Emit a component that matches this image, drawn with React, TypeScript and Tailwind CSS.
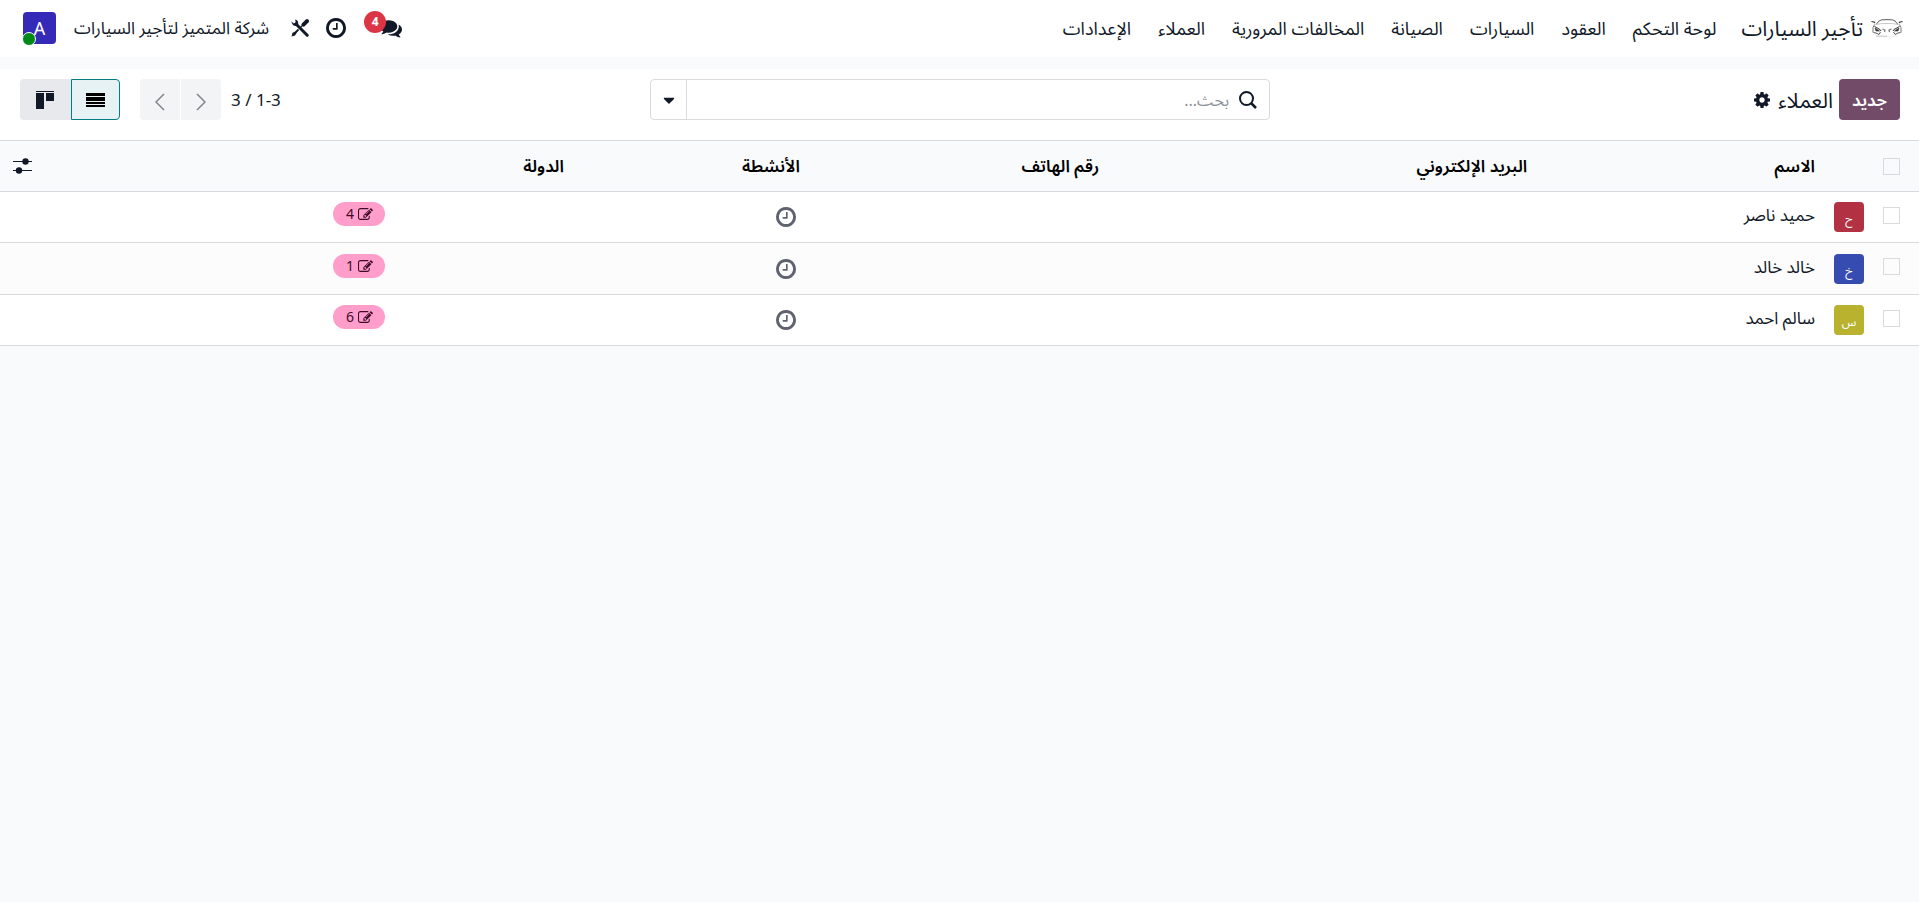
import { FaCaretDown } from "react-icons/fa";

type Customer = {
  id: number;
  name: string;
  initial: string;
  color: string;
  contracts: number;
};

const menu = ["لوحة التحكم", "العقود", "السيارات", "الصيانة", "المخالفات المرورية", "العملاء", "الإعدادات"];

const customers: Customer[] = [
  { id: 1, name: "حميد ناصر", initial: "ح", color: "bg-[#b23243]", contracts: 4 },
  { id: 2, name: "خالد خالد", initial: "خ", color: "bg-[#364cb0]", contracts: 1 },
  { id: 3, name: "سالم احمد", initial: "س", color: "bg-[#b8b22e]", contracts: 6 },
];

function ClockIcon({ className }: { className?: string }) {
  return (
    <svg viewBox="128 128 1536 1536" fill="currentColor" className={className}>
      <path d="M1024 544v448q0 14-9 23t-23 9h-320q-14 0-23-9t-9-23v-64q0-14 9-23t23-9h224v-352q0-14 9-23t23-9h64q14 0 23 9t9 23zm416 352q0-148-73-273t-198-198-273-73-273 73-198 198-73 273 73 273 198 198 273 73 273-73 198-198 73-273zm224 0q0 209-103 385.5t-279.5 279.5-385.5 103-385.5-103-279.5-279.5-103-385.5 103-385.5 279.5-279.5 385.5-103 385.5 103 279.5 279.5 103 385.5z" />
    </svg>
  );
}

function CommentsIcon({ className }: { className?: string }) {
  return (
    <svg viewBox="0 0 1792 1792" fill="currentColor" className={className}>
      <path d="M1408 768q0 139-94 257t-256.5 186.5-353.5 68.5q-86 0-176-16-124 88-278 128-36 9-86 16h-3q-11 0-20.5-8t-11.5-21q-1-3-1-6.5t.5-6.5 2-6l2.5-5 3.5-5.5 4-5 4.500-5 4-4.5q5-6 23-25t26-29.5 22.5-29 25-38.5 20.500-44q-124-72-195-177t-71-224q0-139 94-257t256.5-186.5 353.5-68.5 353.5 68.5 256.5 186.5 94 257zm384 256q0 120-71 224.5t-195 176.5q10 24 20.500 44t25 38.500 22.500 29 26 29.500 23 25q1 1 4 4.500t4.500 5 4 5 3.500 5.500l2.500 5 2 6 .5 6.500-1 6.500q-3 14-13 22t-22 7q-50-7-86-16-154-40-278-128-90 16-176 16-271 0-472-132 58 4 88 4 161 0 309-45t264-129q125-92 192-212t67-254q0-77-23-152 129 71 204 178t75 230z" />
    </svg>
  );
}

function EditIcon({ className }: { className?: string }) {
  return (
    <svg viewBox="0 128 1792 1408" fill="currentColor" className={className}>
      <path d="M888 1184l116-116-152-152-116 116v56h96v96h56zm440-720q-16-16-33 1l-350 350q-17 17-1 33t33-1l350-350q17-17 1-33zm80 594v190q0 119-84.5 203.5t-203.5 84.5h-832q-119 0-203.5-84.5t-84.5-203.5v-832q0-119 84.5-203.5t203.5-84.5h832q63 0 117 25 15 7 18 23 3 17-9 29l-49 49q-14 14-32 8-23-6-45-6h-832q-66 0-113 47t-47 113v832q0 66 47 113t113 47h832q66 0 113-47t47-113v-126q0-13 9-22l64-64q15-15 35-7t20 29zm-96-738l288 288-672 672h-288v-288zm444 132l-92 92-288-288 92-92q28-28 68-28t68 28l152 152q28 28 28 68t-28 68z" />
    </svg>
  );
}

function CogIcon({ className }: { className?: string }) {
  return (
    <svg viewBox="128 128 1536 1536" fill="currentColor" className={className}>
      <path d="M1152 896q0-106-75-181t-181-75-181 75-75 181 75 181 181 75 181-75 75-181zm512-109v222q0 12-8 23t-20 13l-185 28q-19 54-39 91 35 50 107 138 10 12 10 25t-9 23q-27 37-99 108t-94 71q-12 0-26-9l-138-108q-44 23-91 38-16 136-29 186-7 28-36 28h-222q-14 0-24.5-8.5t-11.5-21.5l-28-184q-49-16-90-37l-141 107q-10 9-25 9-14 0-25-11-126-114-165-168-7-10-7-23 0-12 8-23 15-21 51-66.5t54-70.5q-27-50-41-99l-183-27q-13-2-21-12.5t-8-23.5v-222q0-12 8-23t19-13l186-28q14-46 39-92-40-57-107-138-10-12-10-24 0-10 9-23 26-36 98.5-107.5t94.5-71.5q13 0 26 10l138 107q44-23 91-38 16-136 29-186 7-28 36-28h222q14 0 24.5 8.5t11.5 21.5l28 184q49 16 90 37l142-107q9-9 24-9 13 0 25 10 129 119 165 170 7 8 7 22 0 12-8 23-15 21-51 66.5t-54 70.5q26 50 41 98l183 28q13 2 21 12.5t8 23.5z" />
    </svg>
  );
}

function CarLogo() {
  return (
    <svg width="32" height="18" viewBox="0 0 32 18" fill="none" stroke="#333" strokeWidth="0.8">
      <path d="M5 5.5 Q8 1 10.500 0.900 Q16 0.300 21.500 0.900 Q24 1 27 5.500" />
      <path d="M0.500 2.500 L3.500 3.200 L3.800 4.200 M31.500 2.500 L28.500 3.200 L28.200 4.200" strokeWidth="1.2" />
      <path d="M5 5.500 Q10 4.200 16 4.500 Q22 4.200 27 5.500" stroke="#bbb" />
      <path d="M3.500 5.500 Q1.200 8 2 13.500 M28.500 5.500 Q30.800 8 30 13.500" stroke="#555" />
      <path d="M3.500 7.500 L9 10.500 L10 12 M28.500 7.500 L23 10.500 L22 12" strokeWidth="1" />
      <path d="M4 9 L8.500 12 L5 12 Z M28 9 L23.500 12 L27 12 Z" fill="#333" strokeWidth="0.6" />
      <path d="M2.500 13.500 L5 14 L8 15.500 L9.500 13 M29.500 13.500 L27 14 L24 15.500 L22.500 13" />
      <path d="M11.500 10 L14 11 L13.500 13 M20.500 10 L18 11 L18.500 13" stroke="#777" strokeWidth="1.2" />
      <path d="M5 17.200 H16" stroke="#999" strokeWidth="0.6" />
      <path d="M16 17.200 H27" stroke="#ddd" strokeWidth="0.6" />
    </svg>
  );
}

function ToolsIcon() {
  return (
    <svg width="18" height="18" viewBox="0 0 18 18" fill="none" stroke="currentColor">
      {/* wrench */}
      <path d="M5.500 5.500 L16.200 16.300" strokeWidth="3" strokeLinecap="round" />
      <path d="M0.300 2.200 L2.800 4.500 L4.600 3.200 L4.200 0.500 Q7.500 1.200 7.200 5 L5.500 7 Q1.500 7.500 0.300 2.200 Z" fill="currentColor" stroke="none" />
      {/* screwdriver */}
      <path d="M12.500 5.700 L16 2.200" strokeWidth="4" strokeLinecap="round" />
      <path d="M9.800 8.200 L12.500 5.500" strokeWidth="1.200" />
      <path d="M7.500 10.500 L4 14" strokeWidth="1.800" />
      <path d="M0.500 17.500 L1.500 13.800 L4.500 12.500 L5.700 13.700 L4 16.500 Z" fill="currentColor" stroke="none" />
    </svg>
  );
}

const Checkbox = ({ label }: { label: string }) => (
  <input
    type="checkbox"
    aria-label={label}
    className="block size-[17px] appearance-none border border-[#d8dadd] bg-transparent"
  />
);

export default function App() {
  return (
    <div
      dir="rtl"
      className="min-h-screen bg-[#f9fafb] text-[17px] leading-6 text-[#111827] font-['Noto_Sans','Noto_Sans_Arabic','Segoe_UI',sans-serif]"
    >
      {/* Navbar */}
      <header className="flex h-[57px] items-center bg-white pb-0.5 ps-4 pe-[23px]">
        <a href="#" className="flex items-center gap-2">
          <CarLogo />
          <span className="text-[21px]">تأجير السيارات</span>
        </a>
        <nav className="ms-[25px] flex gap-[27px] text-lg">
          {menu.map((item) => (
            <a key={item} href="#">
              {item}
            </a>
          ))}
        </nav>
        <div className="ms-auto flex items-center">
          <button aria-label="المحادثات" className="relative">
            <CommentsIcon className="size-[22px]" />
            <span className="absolute -top-1.5 -left-4 flex size-[22px] items-center justify-center rounded-full bg-[#dc3545] text-xs font-bold text-white">
              4
            </span>
          </button>
          <button aria-label="الأنشطة" className="ms-[34px]">
            <ClockIcon className="size-5" />
          </button>
          <button aria-label="أدوات المطور" className="ms-[17px]">
            <ToolsIcon />
          </button>
          <button className="ms-[22px]">شركة المتميز لتأجير السيارات</button>
          <button aria-label="المستخدم" className="relative ms-[18px] h-8 w-[33px] rounded bg-[#3529b7] text-lg text-white">
            A
            <span className="absolute -bottom-0.5 -left-px size-[14px] rounded-full border border-white bg-[#008818]" />
          </button>
        </div>
      </header>

      {/* Control panel */}
      <div className="mt-3 grid grid-cols-[1fr_620px_1fr] items-center bg-white pb-5 pe-5 ps-[19px] pt-[10px]">
        <div className="flex items-center gap-1.5">
          <button className="h-[41px] rounded bg-[#714b67] px-[13px] font-semibold text-white">جديد</button>
          <h1 className="text-[21px]">العملاء</h1>
          <button aria-label="الإجراءات" className="ms-0.5">
            <CogIcon className="size-4" />
          </button>
        </div>

        <div className="flex h-[41px] rounded border border-[#d8dadd]">
          <label className="flex grow items-center gap-2.5 px-3">
            <svg viewBox="0 0 18 18" fill="none" stroke="currentColor" strokeWidth="2" className="size-[18px]">
              <circle cx="7.500" cy="7.500" r="6.500" />
              <path d="M12 12 L17 17" strokeWidth="2.500" />
            </svg>
            <input
              type="search"
              aria-label="بحث"
              placeholder="بحث..."
              className="grow text-base outline-none placeholder:text-[#8d9199]"
            />
          </label>
          <button aria-label="خيارات البحث" className="flex w-9 items-center justify-center border-s border-[#d8dadd]">
            <FaCaretDown className="size-[18px]" />
          </button>
        </div>

        <div className="flex items-center justify-end">
          <span>1-3 / 3</span>
          <div className="ms-2.5 flex gap-px text-[#808389]">
            <button aria-label="السابق" className="flex h-[41px] w-10 items-center justify-center rounded-r bg-[#f3f4f6]">
              <svg viewBox="0 0 10 18" fill="none" stroke="currentColor" strokeWidth="1.500" className="mt-1 h-[18px] w-2.5">
                <path d="M1 1 L9 9 L1 17" />
              </svg>
            </button>
            <button aria-label="التالي" className="flex h-[41px] w-10 items-center justify-center rounded-l bg-[#f3f4f6]">
              <svg viewBox="0 0 10 18" fill="none" stroke="currentColor" strokeWidth="1.500" className="mt-1 h-[18px] w-2.5">
                <path d="M9 1 L1 9 L9 17" />
              </svg>
            </button>
          </div>
          <div className="ms-5 flex">
            <button
              aria-label="قائمة"
              className="flex h-[41px] w-[49px] items-center justify-center rounded-r border border-[#017e84] bg-[#e6f2f3] text-black"
            >
              <svg width="19" height="14" viewBox="0 0 19 14" fill="currentColor">
                <path d="M0 0H19V3H0zM0 4H19V8H0zM0 9H19V11H0zM0 12H19V14H0z" />
              </svg>
            </button>
            <button aria-label="كانبان" className="flex h-[41px] w-[51px] items-center justify-center rounded-l bg-[#e7e9ed]">
              <svg width="19" height="18" viewBox="0 0 19 18" fill="currentColor">
                <path d="M0 0H18V1H0zM0 2H8V18H0zM10 2H18V10H10z" />
              </svg>
            </button>
          </div>
        </div>
      </div>

      {/* Customers list */}
      <table className="w-full table-fixed border-collapse border-y border-[#d8dadd]">
        <colgroup>
          <col className="w-[47px]" />
          <col className="w-[49px]" />
          <col className="w-[15%]" />
          <col className="w-[22.3%]" />
          <col className="w-[15.6%]" />
          <col className="w-[12.3%]" />
          <col className="w-[9.3%]" />
          <col />
          <col className="w-10" />
        </colgroup>
        <thead>
          <tr className="h-[51px] border-b border-[#d8dadd] text-start text-black [&>th]:px-2 [&>th]:text-start [&>th]:font-semibold">
            <th>
              <div className="ps-[11px]">
                <Checkbox label="تحديد الكل" />
              </div>
            </th>
            <th />
            <th>الاسم</th>
            <th>البريد الإلكتروني</th>
            <th>رقم الهاتف</th>
            <th>الأنشطة</th>
            <th>الدولة</th>
            <th />
            <th>
              <button aria-label="الأعمدة" className="block text-[#111827]">
                <svg width="19" height="16" viewBox="0 0 19 16" fill="currentColor">
                  <path d="M0 3H19V4H0zM0 12H19V13H0z" />
                  <circle cx="12.500" cy="3.500" r="3.200" />
                  <circle cx="6" cy="12.500" r="3.200" />
                </svg>
              </button>
            </th>
          </tr>
        </thead>
        <tbody>
          {customers.map((customer) => (
            <tr
              key={customer.id}
              className="h-[51px] border-b border-[#d8dadd] bg-white even:h-[52px] even:bg-[#fcfcfc] [&>td]:px-2"
            >
              <td>
                <div className="pb-1 ps-[11px]">
                  <Checkbox label={customer.name} />
                </div>
              </td>
              <td>
                <div className={`flex size-[30px] items-center justify-center rounded pt-1 text-xs text-white ${customer.color}`}>
                  {customer.initial}
                </div>
              </td>
              <td className="pb-1">{customer.name}</td>
              <td />
              <td />
              <td>
                <button aria-label="جدولة نشاط" className="ms-1 block text-[#5f636f]">
                  <ClockIcon className="size-5" />
                </button>
              </td>
              <td />
              <td>
                <button className="mb-1.5 flex h-6 w-[52px] items-center justify-center gap-1 rounded-full bg-[#ff9ecb] text-sm text-[#3f0a28]">
                  <EditIcon className="h-3 w-[15px]" />
                  {customer.contracts}
                </button>
              </td>
              <td />
            </tr>
          ))}
        </tbody>
      </table>
    </div>
  );
}
